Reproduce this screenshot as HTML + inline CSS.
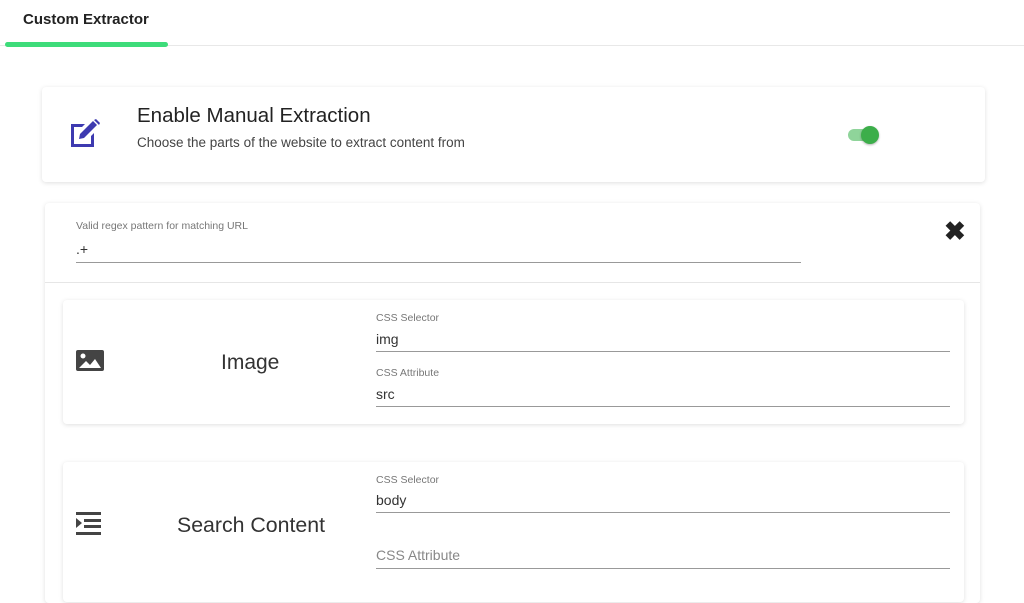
<!DOCTYPE html>
<html><head><style>
*{box-sizing:border-box;margin:0;padding:0}
body{width:1024px;height:570px;overflow:hidden;background:#fff;font-family:"Liberation Sans",sans-serif;position:relative;color:#333}
.abs{position:absolute}
.card{position:absolute;background:#fff;border-radius:4px;box-shadow:0 1px 5px rgba(0,0,0,.13)}
.lbl{position:absolute;font-size:10.5px;color:#777}
.val{position:absolute;font-size:14px;color:#333}
.line{position:absolute;height:1px;background:#999}
</style></head><body>
<div class="abs" style="left:23px;top:11px;font-size:15px;font-weight:bold;color:#222">Custom Extractor</div>
<div class="abs" style="left:0;top:45px;width:1024px;height:1px;background:#e8e8e8"></div>
<div class="abs" style="left:5px;top:42px;width:163px;height:5px;border-radius:3px;background:#3ddc7a"></div>

<div class="card" style="left:42px;top:87px;width:943px;height:95px">
<svg class="abs" style="left:27px;top:32px" width="33" height="30" viewBox="0 0 33 30"><path d="M2 5h14l-3 3H5v17h17v-8l3-3v14H2z" fill="#3d3ab0"/><path d="M10 20l1-5L24 2l4 4L15 19z" fill="#3d3ab0"/><path d="M25 1l2-1 4 4-1 2z" fill="#3d3ab0"/></svg>
<div class="abs" style="left:95px;top:17px;font-size:20.5px;color:#222">Enable Manual Extraction</div>
<div class="abs" style="left:95px;top:48px;font-size:13.5px;color:#444">Choose the parts of the website to extract content from</div>
<div class="abs" style="left:806px;top:42px;width:30px;height:12px;border-radius:6px;background:#8fd49a"></div>
<div class="abs" style="left:819px;top:39px;width:18px;height:18px;border-radius:50%;background:#3cae4a;box-shadow:0 1px 2px rgba(0,0,0,.3)"></div>
</div>

<div class="card" style="left:45px;top:203px;width:935px;height:400px">
<div class="lbl" style="left:31px;top:17px">Valid regex pattern for matching URL</div>
<div class="val" style="left:31px;top:38px">.+</div>
<div class="line" style="left:31px;top:59px;width:725px"></div>
<div class="abs" style="left:899px;top:13px;font-size:26px;font-weight:bold;color:#222">✖</div>
<div class="abs" style="left:0;top:79px;width:935px;height:1px;background:#e6e6e6"></div>
</div>

<div class="card" style="left:63px;top:300px;width:901px;height:124px">
<svg class="abs" style="left:13px;top:50px" width="28" height="22" viewBox="0 0 28 22"><rect width="28" height="21" rx="2" fill="#444"/><path d="M3 18l7-7 4 4 5-6 6 9z" fill="#fff"/><circle cx="7" cy="6" r="2.5" fill="#fff"/></svg>
<div class="abs" style="left:158px;top:51px;font-size:21px;color:#333">Image</div>
<div class="lbl" style="left:313px;top:12px">CSS Selector</div>
<div class="val" style="left:313px;top:31px">img</div>
<div class="line" style="left:313px;top:51px;width:574px"></div>
<div class="lbl" style="left:313px;top:67px">CSS Attribute</div>
<div class="val" style="left:313px;top:86px">src</div>
<div class="line" style="left:313px;top:106px;width:574px"></div>
</div>

<div class="card" style="left:63px;top:462px;width:901px;height:140px">
<svg class="abs" style="left:13px;top:50px" width="25" height="25" viewBox="0 0 25 25"><rect y="0" width="25" height="3" fill="#444"/><rect x="8" y="7" width="17" height="3" fill="#444"/><rect x="8" y="13" width="17" height="3" fill="#444"/><rect y="20" width="25" height="3" fill="#444"/><path d="M0 6l6 5-6 5z" fill="#444"/></svg>
<div class="abs" style="left:114px;top:51px;font-size:21.3px;color:#333">Search Content</div>
<div class="lbl" style="left:313px;top:12px">CSS Selector</div>
<div class="val" style="left:313px;top:30px">body</div>
<div class="line" style="left:313px;top:50px;width:574px"></div>
<div class="abs" style="left:313px;top:85px;font-size:14px;color:#888">CSS Attribute</div>
<div class="line" style="left:313px;top:106px;width:574px"></div>
</div>
</body></html>
